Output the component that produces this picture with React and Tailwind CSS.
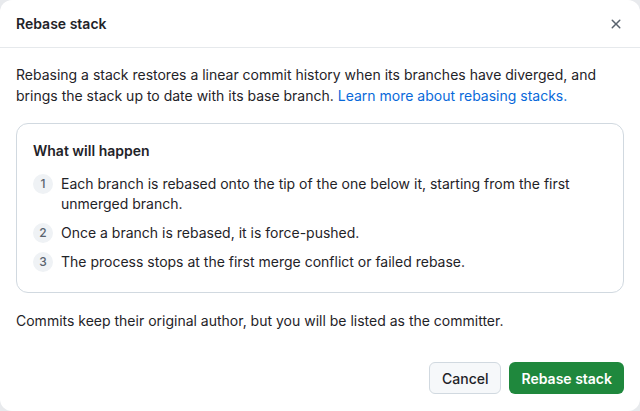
const steps = [
    "Each branch is rebased onto the tip of the one below it, starting from the first unmerged branch.",
    "Once a branch is rebased, it is force-pushed.",
    "The process stops at the first merge conflict or failed rebase.",
];

export default function App() {
    return (
        <div className="h-[411px] w-[640px] bg-[#e8eaed] font-['Inter','Liberation_Sans',sans-serif] text-[#1f2328]">
            <div className="flex h-full flex-col rounded-xl bg-white">
                <div className="flex h-[48px] items-center justify-between border-b border-[#e6e9ec] pl-4 pr-[12px]">
                    <h1 className="text-[14px] font-semibold">Rebase stack</h1>
                    <button className="flex h-6 w-6 items-center justify-center text-[#59636e]">
                        <svg width="16" height="16" viewBox="0 0 16 16" fill="currentColor">
                            <path d="M3.72 3.72a.75.75 0 0 1 1.06 0L8 6.94l3.22-3.22a.749.749 0 0 1 1.275.326.749.749 0 0 1-.215.734L9.06 8l3.22 3.22a.749.749 0 0 1-.326 1.275.749.749 0 0 1-.734-.215L8 9.06l-3.22 3.22a.751.751 0 0 1-1.042-.018.751.751 0 0 1-.018-1.042L6.94 8 3.72 4.78a.75.75 0 0 1 0-1.06Z" />
                        </svg>
                    </button>
                </div>
                <div className="flex flex-1 flex-col px-4 pt-[16px]">
                    <p className="text-[14px] leading-[21px]">
                        Rebasing a stack restores a linear commit history when its branches have diverged, and brings the stack up to date with its base branch.{" "}
                        <a href="#" className="text-[#0969da]">Learn more about rebasing stacks.</a>
                    </p>
                    <div className="mt-[17px] rounded-xl border border-[#d1d9e0] px-4 pb-[20px] pt-[16px]">
                        <h2 className="text-[14px] font-semibold leading-[21px]">What will happen</h2>
                        <ol className="mt-[13px] flex flex-col gap-[9px]">
                            {steps.map((s, i) => (
                                <li key={i} className="flex gap-[8px] text-[14px] leading-[20px]">
                                    <span className="flex h-[20px] w-[20px] shrink-0 items-center justify-center rounded-full bg-[#eff2f5] text-[12px] font-medium text-[#59636e]">
                                        {i + 1}
                                    </span>
                                    <span>{s}</span>
                                </li>
                            ))}
                        </ol>
                    </div>
                    <p className="mt-[17px] text-[14px] leading-[21px]">
                        Commits keep their original author, but you will be listed as the committer.
                    </p>
                </div>
                <div className="flex justify-end gap-2 px-4 pb-[17px]">
                    <button className="h-[32px] rounded-md border border-[#d1d9e0] bg-[#f6f8fa] px-[12px] text-[14px] font-medium">
                        Cancel
                    </button>
                    <button className="h-[32px] rounded-md bg-[#1f883d] px-[12px] text-[14px] font-semibold text-white">
                        Rebase stack
                    </button>
                </div>
            </div>
        </div>
    );
}
